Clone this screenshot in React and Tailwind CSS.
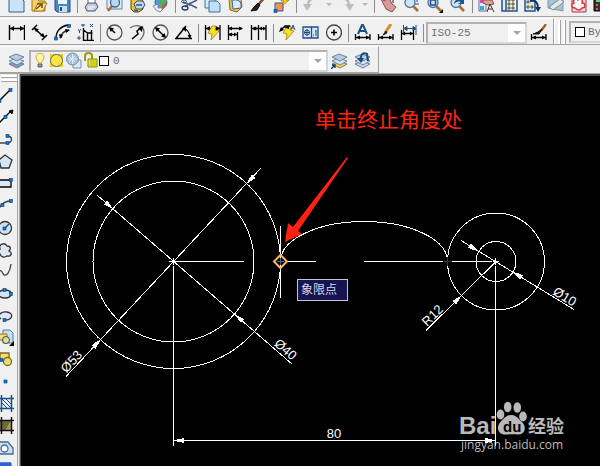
import React from 'react';

const NAVY = '#1f4f86';

function Icon({ children }) {
  return (
    <svg viewBox="0 0 17 17" className="h-[17px] w-[17px] shrink-0" fill="none" stroke="#000" strokeWidth="1">
      {children}
    </svg>
  );
}

function Dot({ x, y }) {
  return <rect x={x - 1.5} y={y - 1.5} width="3" height="3" fill="#0a78d8" stroke="#07407a" strokeWidth="0.6" />;
}

function Bolt() {
  return <path d="M8 2l4 0-1 4 4 1-8 9 1-6-4-1z" fill="#f7e02a" stroke="#a08000" strokeWidth="0.8" />;
}

function Lens({ children }) {
  return (
    <>
      <path d="M10.500 10.500l4.500 4.500" stroke="#b06a35" strokeWidth="2.600" />
      <circle cx="7" cy="6.500" r="5" fill="#cfe4f6" stroke="#55759b" strokeWidth="1.300" />
      {children}
    </>
  );
}

function Sheets({ fill }) {
  return (
    <>
      <path d="M1 12l7-3 8 3-7 4z" fill={fill} stroke="#6d7f99" />
      <path d="M1 9l7-3 8 3-7 4z" fill="#d5e2f0" stroke="#6d84a6" />
      <path d="M1 5l7-3 8 3-7 4z" fill="#b7cbe2" stroke="#6d84a6" />
    </>
  );
}

const icons = {
  New: <path d="M1 0h10l5 5v11H1z" fill="#c9e3f7" stroke="#2f5e92" />,
  Open: (
    <>
      <path d="M1 15V3h5l2 2h6v10z" fill="#f3cf63" stroke="#a07a1c" />
      <path d="M3 15L7 7h9l-4 8z" fill="#fbe391" stroke="#a07a1c" />
      <path d="M5 13l6-5m-5 0h5v4" stroke="#7b5310" strokeWidth="1.600" />
    </>
  ),
  Save: (
    <>
      <path d="M1 1h15v15H3l-2-2z" fill="#4a86c5" stroke="#1d4c86" />
      <path d="M4 1h9v7H4z" fill="#e9f3fc" stroke="none" />
      <path d="M5 10h8v6H5z" fill="#c8dff2" stroke="none" />
      <path d="M7 11v4" stroke="#1d4c86" strokeWidth="2" />
    </>
  ),
  Plot: (
    <>
      <path d="M5 9V1h7v8z" fill="#fff" stroke="#5f6784" />
      <path d="M2 11l3-4h8l2 4-3 4H4z" fill="#c4c9dd" stroke="#4d5472" />
      <path d="M5 11h7M5 13h5" stroke="#fff" />
    </>
  ),
  'Plot Preview': (
    <>
      <path d="M1 2h15v11H1z" fill="#e3edf7" stroke="#5f83a8" />
      <path d="M6 10l-4 5" stroke="#b06a35" strokeWidth="2.600" />
      <circle cx="9" cy="6.500" r="4.500" fill="#b9d7ee" stroke="#41658e" strokeWidth="1.300" />
    </>
  ),
  Publish: (
    <>
      <path d="M2 2h9l3 3v8l-4 3H5l-3-3z" fill="#f0c52c" stroke="#4a4227" />
      <path d="M5 8l3-3h6l2 4-3 4H7z" fill="#c9d5e6" stroke="#2f5080" />
      <path d="M7 9h6M5 14l4 1" stroke="#1d5aa0" strokeWidth="1.500" />
    </>
  ),
  'Publish to Web': (
    <>
      <circle cx="9" cy="6.500" r="6" fill="#4e9bd8" stroke="#2b62a0" />
      <path d="M6 3l4 2-1 5 4-3 1-5" stroke="#55b04c" strokeWidth="2.200" />
      <path d="M1 10l5-2v4l7-1-5 5-4-2z" fill="#e7ecf4" stroke="#7d8aa5" />
      <path d="M10 13l4-6" stroke="#d8502f" strokeWidth="2" />
    </>
  ),
  Cut: (
    <>
      <path d="M8 8L16 4M8 8l8 4M2 6l7 3M9 7l-5 4" stroke="#4a5b85" strokeWidth="1.500" />
      <ellipse cx="3" cy="5.500" rx="2.500" ry="1.500" stroke="#26396e" />
      <ellipse cx="4" cy="12" rx="3" ry="2" stroke="#26396e" strokeWidth="1.300" />
    </>
  ),
  Copy: (
    <>
      <path d="M1 1h8l2 2v9H1z" fill="#d7e9f8" stroke="#41719f" />
      <path d="M5 5h8l3 3v8H5z" fill="#c2dff5" stroke="#41719f" />
    </>
  ),
  Paste: (
    <>
      <path d="M2 2l12 1 1 8-5 5-7-2z" fill="#e6be55" stroke="#8d6a1d" />
      <path d="M5 4h6l3 3v5l-8 1z" fill="#d7eaf9" stroke="#35679c" />
    </>
  ),
  'Match Properties': (
    <>
      <path d="M16 0L8 9" stroke="#8a4b27" strokeWidth="2.600" />
      <path d="M10 9l-3 5-6 1 3-4 4-4z" fill="#222" stroke="#111" />
    </>
  ),
  'Block Editor': (
    <>
      <path d="M2 7h8v8H2z" fill="#f3935b" stroke="#2a5da2" />
      <path d="M11 0l5 0-3 4 3 0-7 6 2-5-3 0z" fill="#ffd52c" stroke="#9d7a00" strokeWidth="0.800" />
      <Dot x={2.5} y={15} />
    </>
  ),
  Undo: (
    <>
      <path d="M16 3C10 1 6 4 6 9" stroke="#bcbfc2" strokeWidth="2.500" />
      <path d="M1 8h9l-5 7z" fill="#bcbfc2" stroke="none" />
    </>
  ),
  Redo: (
    <>
      <path d="M1 3c6-2 10 1 10 6" stroke="#bcbfc2" strokeWidth="2.500" />
      <path d="M7 8h9l-4 7z" fill="#bcbfc2" stroke="none" />
    </>
  ),
  Pan: (
    <>
      <path d="M1 3l4 2-1-5 4 4V0l4 8 4 3-4 5-6-3z" fill="#d99a92" stroke="#8a4d5a" />
      <path d="M13 0v7m-3-4h7" stroke="#2b62a0" strokeWidth="1.300" />
    </>
  ),
  'Zoom Realtime': <Lens><path d="M14 0v6m-2-3h4m-4 5h4" stroke="#23538c" /></Lens>,
  'Zoom Window': <><Lens><path d="M4.500 4h5v5h-5z" stroke="#23538c" strokeWidth="1.500" /></Lens><path d="M17 13v4h-4z" fill="#000" stroke="none" /></>,
  'Zoom Previous': <Lens><path d="M5 8c0-4 4-6 8-4l2-3v7H9l3-2c-3-1-5 0-7 2z" fill="#1d5690" stroke="none" /></Lens>,
  Properties: (
    <>
      <path d="M1 0h7v15H1z" fill="#e9e9f0" stroke="#6b7488" />
      <path d="M2 3h4v4H2z" fill="#e240c8" stroke="none" />
      <path d="M2 10h4v4H2z" fill="#36a8df" stroke="none" />
      <path d="M5 4l9 0 2 4-6 1-5-2z" fill="#e2a190" stroke="#8c4f46" />
      <path d="M9 16l3-8 4 8m-6-3h4" stroke="#333" />
    </>
  ),
  DesignCenter: (
    <>
      <path d="M1 0h15v15H1z" fill="#e3edf7" stroke="#23538c" strokeWidth="1.500" />
      <path d="M5 0v15" stroke="#23538c" strokeWidth="1.500" />
      <path d="M7 3h2v2H7zM11 3h2v2h-2zM7 7h2v2H7zM11 7h2v2h-2zM7 11h2v2H7zM11 11h2v2h-2z" fill="#d0a425" stroke="#6f6430" />
    </>
  ),
  'Tool Palettes': (
    <>
      <path d="M1 0h10v15H1z" fill="#d7e6f3" stroke="#23538c" strokeWidth="1.500" />
      <path d="M3 5h2v2H3zM3 10h2v2H3zM7 10h2v2H7z" fill="#d0a425" stroke="#6f6430" />
      <path d="M6 5c6-1 8 2 8 7" stroke="#16365f" strokeWidth="2" />
      <path d="M11 11h6l-3 5z" fill="#16365f" stroke="none" />
    </>
  ),
  'Sheet Set Manager': (
    <>
      <path d="M1 0l15 3v12L1 12z" fill="#a9c3d4" stroke="#7f9aac" />
      <path d="M2 11L13 3l4 3-11 8z" fill="#e3e8e8" stroke="#7d8e96" />
    </>
  ),
  'Markup Set Manager': (
    <>
      <path d="M2 2h14v14H2z" fill="#e9d7d9" stroke="#a03a44" />
      <path d="M5 12c-4 0-4-4-1-5-2-4 3-5 4-3 3-3 5 0 4 3 4 0 4 5 0 5-2 3-5 2-7 0z" fill="#fff" stroke="#e2333b" strokeWidth="1.500" />
    </>
  ),
  QuickCalc: (
    <>
      <path d="M1 0h15v15H1z" fill="#333" />
      <path d="M3 5h10" stroke="#6fd06f" strokeWidth="2" />
      <path d="M3 9h2m2 0h2M3 13h2m2 0h2" stroke="#e8584e" strokeWidth="2" />
    </>
  ),
  Linear: (
    <>
      <path d="M1.500 1v15M16.500 1v15M2 4.500h14" strokeWidth="1.400" />
      <path d="M2 4.500l4-2.500v5zM16 4.500l-4-2.500v5z" fill="#000" stroke="none" />
    </>
  ),
  Aligned: (
    <>
      <path d="M1 6l5-5M11 16l5-5M3 4l11 10" strokeWidth="1.500" />
      <path d="M3 4l5 1-3 3zM14 13l-5-1 3-3z" fill="#000" stroke="none" />
    </>
  ),
  'Arc Length': (
    <>
      <path d="M2 14C2 7 7 2 14 1" strokeWidth="1.300" />
      <path d="M7 14c0-4 3-7 8-8" stroke="#333" strokeWidth="1.600" />
      <path d="M6 15l-1-5 4 1zM16 6l-5-1 1 4z" fill="#000" stroke="none" />
      <Dot x={2} y={14.5} />
      <Dot x={15} y={2} />
    </>
  ),
  Ordinate: (
    <>
      <path d="M6.500 4v12.500H17M6.500 6l4 3h5M10.500 16V9M14.500 6v10" strokeWidth="1.400" />
      <path d="M1 5l1.500 2L4 5M2.500 7v2M1 13h2v2H1zM5 0h2v2H5zM13 0l3 3m0-3l-3 3" stroke={NAVY} />
    </>
  ),
  Radius: (
    <>
      <circle cx="8.500" cy="8.500" r="7.500" stroke="#555" strokeWidth="1.300" />
      <path d="M9 9L4 4" strokeWidth="1.500" />
      <path d="M3 3l5 1.500L4.500 8z" fill="#000" stroke="none" />
    </>
  ),
  Jogged: (
    <>
      <path d="M1 4c5-4 14-3 14 4 0 4-2 6-4 8" stroke="#666" strokeWidth="1.300" />
      <path d="M3 15l6-5-1-3 5-4" strokeWidth="1.500" />
      <path d="M14 2l-1 6-4-4z" fill="#000" stroke="none" />
    </>
  ),
  Diameter: (
    <>
      <circle cx="8.500" cy="8.500" r="7.500" stroke="#555" strokeWidth="1.300" />
      <path d="M4 4l9 9" strokeWidth="1.500" />
      <path d="M3 3l5 1.500L4.500 8zM14 14l-5-1.500L12.500 9z" fill="#000" stroke="none" />
    </>
  ),
  Angular: (
    <>
      <path d="M11 2L1 14.500h16" strokeWidth="1.500" />
      <path d="M8 5c4-1 7 4 7 9" strokeWidth="1.200" />
      <path d="M7 4l4-1v5zM15 15l-2.500-4h4z" fill="#000" stroke="none" />
    </>
  ),
  'Quick Dimension': (
    <>
      <path d="M1.500 1v15M16 1v15M2 4.500h14" strokeWidth="1.300" />
      <path d="M2 4.500L6 2v5zM16 4.500L12 2v5z" fill="#000" stroke="none" />
      <Bolt />
    </>
  ),
  Baseline: (
    <>
      <path d="M1.500 1v15M2 4.500h13M2 10.500h8M10.500 8v8" strokeWidth="1.300" />
      <path d="M1 4.500l4-2v4zM16 4.500l-4-2v4zM1 10.500l4-2v4zM10 10.500l-3-2v4z" fill="#000" stroke="none" />
    </>
  ),
  Continue: (
    <>
      <path d="M1.500 1v15M8.500 1v15M16 1v15M2 4.500h14" strokeWidth="1.300" />
      <path d="M2 4.500l3-2v4zM8 4.500l-3-2v4zM9 4.500l3-2v4zM16 4.500l-3-2v4z" fill="#000" stroke="none" />
    </>
  ),
  'Quick Leader': (
    <>
      <Bolt />
      <path d="M2 6l4-4h5" strokeWidth="1.300" />
      <path d="M0 8l2-5 3 3zM4 3l6-1v3z" fill="#000" stroke="none" />
      <path d="M12 6l2-5 2 5m-3-2h2" stroke={NAVY} />
    </>
  ),
  Tolerance: (
    <>
      <path d="M1 3h15v11H1zM9.500 3v11" fill="#d3e4f4" stroke={NAVY} strokeWidth="1.300" />
      <circle cx="5" cy="8.500" r="2.500" stroke={NAVY} />
      <path d="M5 5v7M2 8.500h6M11 11h1m2-5v6m-1-5h1" stroke={NAVY} />
    </>
  ),
  'Center Mark': (
    <>
      <circle cx="9" cy="8.500" r="7.500" stroke="#444" strokeWidth="1.300" />
      <path d="M9 5.500v6M6 8.500h6" strokeWidth="1.600" />
    </>
  ),
  'Dimension Edit': (
    <>
      <path d="M4 10L8 1h1l4 9M6 7h6" stroke={NAVY} strokeWidth="2" />
      <path d="M1.500 10v6M16 10v6M2 13.500h14" strokeWidth="1.300" />
      <path d="M2 13.500l4-2v4zM16 13.500l-4-2v4z" fill="#000" stroke="none" />
    </>
  ),
  'Dimension Text Edit': (
    <>
      <path d="M14 0L8 9" stroke="#d4912b" strokeWidth="3" />
      <path d="M9 7l-3 4 4-2z" fill="#222" stroke="#222" />
      <path d="M1.500 10v6M16 10v6M2 13.500h14" strokeWidth="1.300" />
      <path d="M2 13.500l4-2v4zM16 13.500l-4-2v4z" fill="#000" stroke="none" />
    </>
  ),
  'Dimension Update': (
    <>
      <path d="M3.500 1v7M16 1v10M4 4.500h12M4 4.500l3-2v4zM16 4.500l-3-2v4z" fill={NAVY} stroke={NAVY} strokeWidth="1" />
      <path d="M1.500 6v10M13.500 6v10M2 9.500h11" strokeWidth="1.300" />
      <path d="M2 9.500l3-2v4zM13 9.500l-3-2v4z" fill="#000" stroke="none" />
    </>
  ),
  'Dimension Style': (
    <>
      <path d="M16 0l-5 7" stroke="#9a5c2c" strokeWidth="2.200" />
      <path d="M12 5l-3 5H3l5-2z" fill="#111" stroke="#111" />
      <path d="M1.500 10v6M16 10v6M2 13.500h14" strokeWidth="1.300" />
      <path d="M2 13.500l4-2v4zM16 13.500l-4-2v4z" fill="#000" stroke="none" />
    </>
  ),
  'Layer Properties Manager': <Sheets fill="#8299b8" />,
  'Make Layer Current': (
    <>
      <Sheets fill="#f2d52f" />
      <path d="M0 17l4-4m-3 0h3v3" stroke="#12365f" strokeWidth="1.300" />
    </>
  ),
  'Layer Previous': (
    <>
      <Sheets fill="#cfdbe8" />
      <path d="M7 8C6 3 9 0 13 2l1 7" stroke="#1c4a7d" strokeWidth="2" />
      <path d="M3 6h7l-3 5z" fill="#1c4a7d" stroke="none" />
    </>
  ),
  Line: <><path d="M2 14L13 3" strokeWidth="1.400" /><Dot x={2.5} y={14} /><Dot x={13.5} y={3} /></>,
  'Construction Line': (
    <>
      <path d="M1 15L14 2" strokeWidth="1.300" />
      <path d="M16 1l-1 4-3-3z" fill="#000" />
      <Dot x={8.5} y={8} />
    </>
  ),
  Polyline: <><path d="M0 12h10c6 0 6-7 0-7" stroke="#444" strokeWidth="1.400" /><Dot x={10.5} y={12} /><Dot x={10.5} y={5} /></>,
  Polygon: <path d="M8 2l7 5-3 8H4L2 7z" fill="#d7e6f3" stroke="#333" strokeWidth="1.300" />,
  Rectangle: <><path d="M0 5h14v7H0z" fill="#dce8f4" strokeWidth="1.300" /><Dot x={14} y={5} /></>,
  Arc: <><path d="M1 14C3 8 7 4 14 4" strokeWidth="1.400" stroke="#444" /><Dot x={5.5} y={8} /><Dot x={14} y={4} /></>,
  Circle: <><circle cx="8" cy="9" r="6.500" fill="#cfe1f2" stroke="#333" strokeWidth="1.300" /><path d="M8 9l4-4" stroke={NAVY} strokeWidth="1.500" /><Dot x={7.5} y={9.5} /></>,
  'Revision Cloud': <path d="M3 13c-4-1-3-5 0-5-2-5 5-7 7-3 4 0 4 3 2 5 4 2 2 6-2 5-3 2-6 1-7-2z" fill="#dce8f4" stroke="#333" strokeWidth="1.300" />,
  Spline: <path d="M0 12c3-8 5-3 7 0 3 1 6-3 7-11" stroke="#444" strokeWidth="1.300" />,
  Ellipse: <><ellipse cx="8" cy="9" rx="6.500" ry="4" fill="#d5e4f2" stroke="#333" strokeWidth="1.300" /><Dot x={7.500} y={5} /><Dot x={14} y={9} /></>,
  'Ellipse Arc': <><path d="M8 13c8 0 9-7 2-8-7-1-10 4-6 7" fill="#dce8f4" stroke="#333" strokeWidth="1.300" /><Dot x={7.500} y={13} /></>,
  'Insert Block': (
    <>
      <path d="M6 1h7l3 3v10H6z" fill="#c9dff2" stroke="#4d7aa8" />
      <path d="M1 5h9v6H1z" fill="#f3dc72" stroke="#8a741d" />
      <circle cx="9" cy="11" r="3.500" fill="#f3dc72" stroke={NAVY} />
      <path d="M17 12v5h-5z" fill="#000" stroke="none" />
    </>
  ),
  'Make Block': (
    <>
      <path d="M3 2h9v7H3z" fill="#f3dc72" stroke="#7d6a1c" strokeWidth="1.300" />
      <circle cx="10.500" cy="10.500" r="4" fill="#f3dc72" stroke="#7d6a1c" strokeWidth="1.300" />
      <Dot x={4.500} y={9} />
    </>
  ),
  Point: <Dot x={8.5} y={8.5} />,
  Hatch: (
    <>
      <path d="M1 3h14v11H1z" fill="#e2eef8" stroke="none" />
      <path d="M0 3.500h17M0 13.500h17M4.500 0v17M14.500 0v17" stroke={NAVY} strokeWidth="1.500" />
      <path d="M5 4l9 9M9 4l5 5M5 8l5 5" stroke={NAVY} />
    </>
  ),
  Gradient: (
    <>
      <path d="M3 3h12v11H3z" fill="#6d6a3e" stroke="none" />
      <path d="M14 3v11H8z" fill="#a79b45" stroke="none" />
      <path d="M0 3.500h17M0 13.500h17M4.500 0v17M14.500 0v17" stroke="#10131f" strokeWidth="1.500" />
    </>
  ),
  Region: <><path d="M0 3h11l5 6v6H0z" fill="#cfe1f0" stroke="#3f6e9c" strokeWidth="1.300" /><circle cx="7.500" cy="9.500" r="3.500" fill="#fff" stroke="#3f6e9c" strokeWidth="1.300" /></>,
  Table: <><path d="M0 2h14v14H0z" fill="#fff" stroke="#1c49a8" /><path d="M0 3.500h14" stroke="#2c62d6" strokeWidth="4" /></>,
};

const standardTools = [
  'New', 'Open', 'Save', '|', 'Plot', 'Plot Preview', 'Publish', 'Publish to Web', '|',
  'Cut', 'Copy', 'Paste', 'Match Properties', 'Block Editor', '|', 'Undo', 'v', 'Redo', 'v', '|',
  'Pan', 'Zoom Realtime', 'Zoom Window', 'Zoom Previous', '|',
  'Properties', 'DesignCenter', 'Tool Palettes', 'Sheet Set Manager', 'Markup Set Manager', 'QuickCalc',
];

const dimensionTools = [
  'Linear', 'Aligned', 'Arc Length', 'Ordinate', '|', 'Radius', 'Jogged', 'Diameter', 'Angular', '|',
  'Quick Dimension', 'Baseline', 'Continue', '|', 'Quick Leader', 'Tolerance', 'Center Mark', '|',
  'Dimension Edit', 'Dimension Text Edit', 'Dimension Update', '|',
];

const drawTools = [
  'Line', 'Construction Line', 'Polyline', 'Polygon', 'Rectangle', 'Arc', 'Circle', 'Revision Cloud', 'Spline',
  'Ellipse', 'Ellipse Arc', 'Insert Block', 'Make Block', 'Point', 'Hatch', 'Gradient', 'Region', 'Table',
];

function ToolButton({ name }) {
  return (
    <button type="button" aria-label={name} className="flex w-[23px] shrink-0 items-center justify-center">
      <Icon>{icons[name]}</Icon>
    </button>
  );
}

function Tools({ items }) {
  return items.map((item, i) => {
    if (item === '|') {
      return (
        <span key={i} className="flex h-[18px] w-[6px] shrink-0 justify-center">
          <span className="w-px bg-[#8c8c8c]" />
        </span>
      );
    }
    if (item === 'v') {
      return (
        <button key={i} type="button" aria-label={`${items[i - 1]} list`} className="flex h-4 w-[13px] shrink-0 items-center justify-center">
          <svg viewBox="0 0 6 4" className="h-1 w-[6px]"><path d="M0 0h6L3 3z" fill="#b5b8c4" /></svg>
        </button>
      );
    }
    return <ToolButton key={i} name={item} />;
  });
}

function ComboArrow() {
  return (
    <span className="pointer-events-none absolute inset-y-0 right-0 flex w-[17px] items-center justify-center bg-white">
      <svg viewBox="0 0 8 4" className="h-1 w-2"><path d="M0 0h8L4 4z" fill="#a5a5a5" /></svg>
    </span>
  );
}

function LayerIcons() {
  return (
    <svg viewBox="0 0 76 17" className="h-[17px] w-[76px] shrink-0" fill="none">
      <path d="M5.500 11c0-2-2.500-3-2.500-6 0-5 8-5 8 0 0 3-2.500 4-2.500 6z" fill="#fff6a8" stroke="#c9ac3d" />
      <path d="M5 12h4v3H5z" fill="#8e96a3" stroke="#555" strokeWidth="0.800" />
      <path d="M17 2h13v13H17z" fill="#f3c713" />
      <circle cx="23.500" cy="8.500" r="6" fill="#ffe53b" stroke="#3f73a5" />
      <path d="M40 8h8v8h-8z" fill="#dce9f4" stroke="#6d93b8" />
      <circle cx="39.500" cy="7" r="6" fill="#a8c2dc" stroke="#7190b4" />
      <path d="M39.500 2v10M35 7h9M36 4l6 6m0-6l-6 6" stroke="#dfebf6" />
      <path d="M52 9V4c0-4 7-4 7 0v3" stroke="#9c9c14" strokeWidth="2" />
      <path d="M55 7h9v8h-9z" fill="#e6e62b" stroke="#8b8b12" />
      <path d="M57 9h6M57 11h6M57 13h6" stroke="#a3a31a" strokeWidth="0.700" />
      <rect x="66.500" y="4.500" width="9" height="9" fill="#fff" stroke="#000" />
    </svg>
  );
}

function StandardToolbar() {
  return (
    <div role="toolbar" aria-label="Standard" className="flex h-[17px] items-end overflow-hidden border-b border-[#a3a3a3] pb-[3px] pl-[5px]">
      <Tools items={standardTools} />
    </div>
  );
}

function DimensionToolbar() {
  return (
    <div className="flex h-7 items-stretch overflow-hidden border-b border-[#a3a3a3] pt-px">
      <div role="toolbar" aria-label="Dimension" className="flex shrink-0 items-center border-t border-r border-t-white border-r-[#a3a3a3] pt-[2px] pr-[3px] pl-[5px]">
        <Tools items={dimensionTools} />
        <div className="relative h-[22px] w-[101px] border-2 border-[#b2b2b2] border-r-[#d6d6d6] border-b-[#d6d6d6]">
          <select aria-label="Dimension style" className="block h-full w-full appearance-none bg-[#f0f0f0] pl-[3px] font-['Liberation_Mono',monospace] text-[11px] leading-4 text-[#6e6e6e]">
            <option>ISO-25</option>
          </select>
          <ComboArrow />
        </div>
        <ToolButton name="Dimension Style" />
      </div>
      <div role="toolbar" aria-label="Properties" className="flex flex-1 items-center border-l border-white pt-[2px] pl-[3px]">
        <span className="mr-[2px] h-6 w-[3px] border-r border-[#a3a3a3] bg-white" />
        <span className="mr-[3px] h-6 w-[3px] border-r border-[#a3a3a3] bg-white" />
        <div className="flex h-[22px] flex-1 items-center border-2 border-r-0 border-[#b2b2b2] border-b-[#d6d6d6] pl-1">
          <span className="h-[10px] w-[10px] shrink-0 border border-black bg-white" />
          <select aria-label="Color" className="ml-[3px] min-w-0 flex-1 appearance-none overflow-hidden font-['Liberation_Mono',monospace] text-[11px] leading-4 text-[#6e6e6e]">
            <option>By</option>
          </select>
        </div>
      </div>
    </div>
  );
}

function LayerToolbar() {
  return (
    <div className="border-b border-[#a3a3a3] pt-px">
      <div role="toolbar" aria-label="Layers" className="flex h-[27px] w-[379px] items-center border-t border-r border-b border-[#a3a3a3] border-t-white pt-[2px] pl-[5px]">
        <ToolButton name="Layer Properties Manager" />
        <div className="relative ml-px flex h-[22px] flex-1 items-center border-2 border-[#b2b2b2] border-r-[#d6d6d6] border-b-[#d6d6d6] pl-[2px]">
          <LayerIcons />
          <select aria-label="Layer" className="h-full min-w-0 flex-1 appearance-none pl-1 font-['Liberation_Mono',monospace] text-[11px] leading-4 text-[#6e6e6e]">
            <option>0</option>
          </select>
          <ComboArrow />
        </div>
        <ToolButton name="Make Layer Current" />
        <ToolButton name="Layer Previous" />
        <span className="w-1" />
      </div>
    </div>
  );
}

function DrawPalette() {
  return (
    <div className="relative w-5 shrink-0 overflow-hidden border-r border-[#a3a3a3]">
      <div role="toolbar" aria-label="Draw" className="absolute inset-y-0 left-0 flex w-[18px] flex-col items-end border-r border-[#a3a3a3]">
        <span className="mt-px h-[3px] w-4 shrink-0 border-b border-[#a3a3a3] bg-white" />
        <span className="mt-px mb-[2px] h-[3px] w-4 shrink-0 border-b border-[#a3a3a3] bg-white" />
        {drawTools.map((name) => (
          <button key={name} type="button" aria-label={name} className="flex h-[22px] w-6 shrink-0 items-center justify-center">
            <Icon>{icons[name]}</Icon>
          </button>
        ))}
      </div>
    </div>
  );
}

// filled dimension arrowhead, tip at x,y, body trailing off at the given angle
function Arrowhead({ x, y, angle }) {
  return <path d="M0 0L5 -1.500L10 -2.500V2.500L5 1.500Z" transform={`translate(${x} ${y}) rotate(${angle})`} fill="#fff" stroke="none" />;
}

const labels = [
  { text: 'Ø53', x: 71, y: 361, angle: -47 },
  { text: 'Ø40', x: 286, y: 349, angle: 41 },
  { text: 'R12', x: 432, y: 315, angle: -44 },
  { text: 'Ø10', x: 565, y: 296, angle: 31 },
  { text: '80', x: 334, y: 433, angle: 0 },
];

function Drawing() {
  return (
    <svg viewBox="21 76 579 390" className="block w-full" fill="none">
      <g fill="#b9b9b9">
        <text x="459" y="434" className="font-['Liberation_Sans',sans-serif] text-[24px] font-bold">Bai</text>
        <ellipse cx="500.500" cy="414.500" rx="3.800" ry="5" />
        <ellipse cx="507.700" cy="407" rx="3.800" ry="5.200" />
        <ellipse cx="517.300" cy="407.500" rx="3.800" ry="5.200" />
        <ellipse cx="523" cy="416.500" rx="3.800" ry="5" />
        <path d="M511.500 415c5 0 7 4 10.500 7 5 5 3 13-4 12.500-4-.5-8-.5-12 0-8 .500-10-7-6-12 4-4 6-7.500 11.500-7.500z" />
        <text x="503" y="432" fill="#000" className="font-['Liberation_Sans',sans-serif] text-[15px] font-bold">du</text>
        <text x="528" y="433" className="font-['Noto_Sans_CJK_SC',sans-serif] text-[18px] font-bold">经验</text>
        <text x="461" y="449" className="font-['Open_Sans',sans-serif] text-[12px]">jingyan.baidu.com</text>
      </g>

      <g stroke="#fff" strokeWidth="1" shapeRendering="crispEdges">
        <circle cx="173.500" cy="261.500" r="107" />
        <circle cx="173.500" cy="261.500" r="80.500" />
        <circle cx="496" cy="261.500" r="48.500" />
        <circle cx="496" cy="261.500" r="20" />
        <path d="M280.500 261.500A83.500 40 0 0 1 447.500 261.500" />

        <path d="M169 261.500h8M173.500 258v7M177 261.500h67M173.500 266v180" />
        <path d="M364 261.500h128M493 261.500h6M495.500 258v7M495.500 266v180" />
        <path d="M280.500 226v27M280.500 270v28M287 261.500h29" />
        <path d="M173.500 440.500h322" />

        <path d="M66 376.500L261 168M97 195L292.500 364.500" />
        <path d="M426 330.500L496 261.500M461 240.500L574 309.500" />

        <Arrowhead x={174} y={440.5} angle={0} />
        <Arrowhead x={495} y={440.5} angle={180} />
        <Arrowhead x={100.5} y={339.500} angle={133} />
        <Arrowhead x={247} y={183.5} angle={-47} />
        <Arrowhead x={113} y={209} angle={-139} />
        <Arrowhead x={235} y={314.500} angle={41} />
        <Arrowhead x={461.5} y={295.5} angle={135} />
        <Arrowhead x={478} y={251} angle={-149} />
        <Arrowhead x={513} y={272} angle={31} />
      </g>

      <g fill="#fff" className="font-['Liberation_Sans',sans-serif] text-[13px]" textAnchor="middle">
        {labels.map((l) => (
          <text key={l.text} dy="5" transform={`translate(${l.x} ${l.y}) rotate(${l.angle})`}>{l.text}</text>
        ))}
      </g>

      <path d="M447.500 257v9M443 261.500h9" stroke="#0d3d70" />
      <path d="M280.500 255l6.500 6.500-6.500 6.500-6.500-6.500z" stroke="#ffb46a" strokeWidth="2" />
      <path d="M280.500 258v7M277 261.500h7" stroke="#3c648c" />

      <path d="M285 242L288 223L293 227L347 157L348 158L298 231L302 234Z" fill="#ff2211" />
      <text x="315" y="127" fill="#ff2211" className="font-['Noto_Sans_CJK_SC',sans-serif] text-[21px]">单击终止角度处</text>

      <rect x="297.500" y="279.500" width="50" height="21" fill="#171452" stroke="#c4c4d8" />
      <text x="301" y="294" fill="#d8d8e4" className="font-['Noto_Sans_CJK_SC',sans-serif] text-[12px]">象限点</text>
    </svg>
  );
}

export default function App() {
  return (
    <div className="flex min-h-screen flex-col overflow-hidden bg-[#f0f0f0]">
      <StandardToolbar />
      <DimensionToolbar />
      <LayerToolbar />
      <div className="flex flex-1">
        <DrawPalette />
        <main className="min-w-0 flex-1 border-t-2 border-l border-[#4a4a4a] bg-black">
          <Drawing />
        </main>
      </div>
    </div>
  );
}
